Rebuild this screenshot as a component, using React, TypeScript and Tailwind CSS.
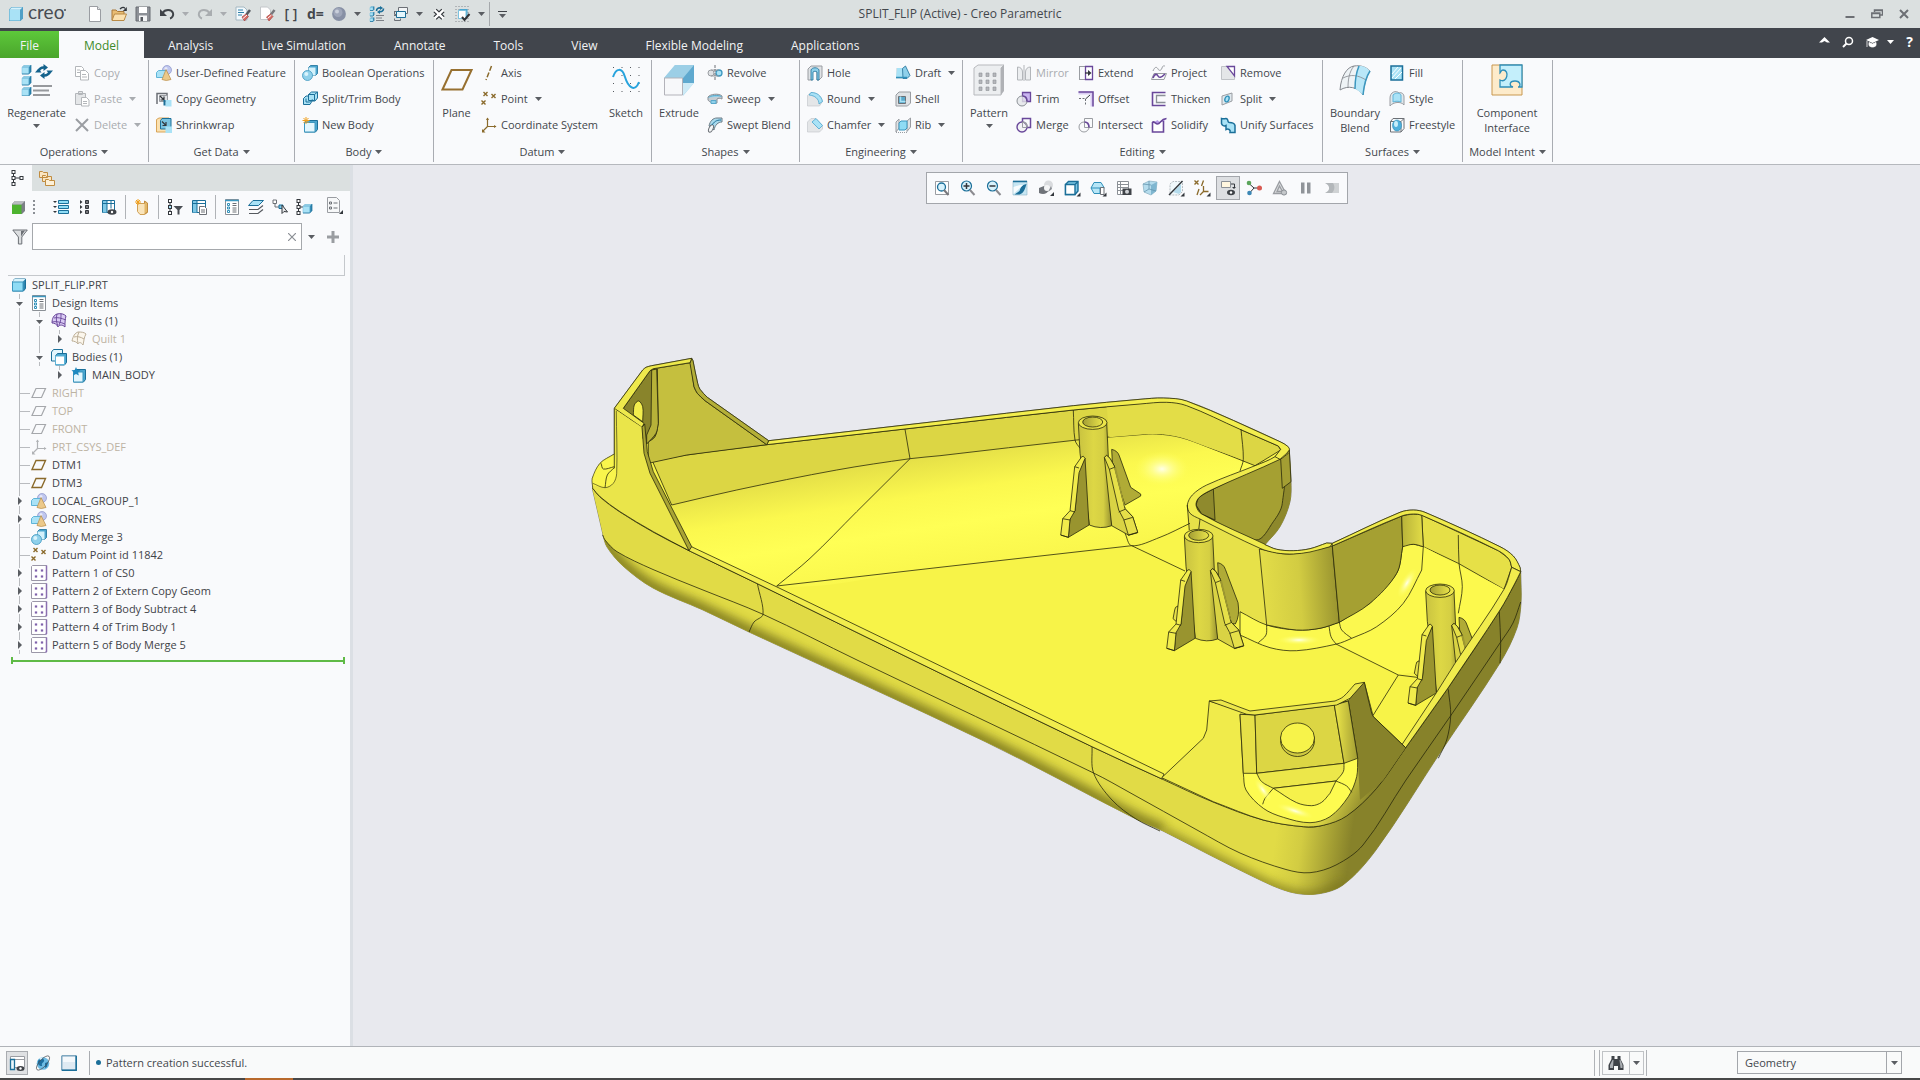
import React from 'react';
import type { ReactNode } from 'react';

/* ---------- small icons (16 x 16) ---------- */

const B = '#1b6f99';
const LB = '#a9e2f6';
const P = '#69479a';
const G = '#9a9da2';
const T = '#8a6a2b';

const cube = (x: number, y: number, s: number, f = LB) => {
  const d = s / 4;
  return (
    <g key={`${x}-${y}`}>
      <path d={`M${x} ${y + d}l${d} ${-d}h${s - d}v${s - d}l${-d} ${d}h${-(s - d)}z`} fill="#2f86b0" />
      <path d={`M${x} ${y + d}l${d} ${-d}h${s - d}l${-d} ${d}z`} fill="#8fcbe3" />
      <path d={`M${x} ${y + d}h${s - d}v${s - d}h${-(s - d)}z`} fill={f} stroke="#7cc3e0" strokeWidth=".6" />
      <path d={`M${x} ${y + s}h${s - d}l${d} ${-d}V${y}`} stroke={B} strokeWidth=".7" />
    </g>
  );
};

const node = (x: number, y: number, f = '#fff') => <rect x={x} y={y} width="3" height="3" fill={f} stroke="#33373c" />;
const cross = (x: number, y: number, c = T) => <path d={`M${x} ${y}l4 4m0-4l-4 4`} stroke={c} strokeWidth="1.4" />;

const page = (
  <>
    <path d="M2.5.5h8l3 3v12h-11z" fill="#fff" stroke={G} />
    <path d="M10.5.5v3h3" stroke={G} fill="#e4e6e8" />
  </>
);

const shapes = (
  <>
    <circle cx="11" cy="5" r="4.5" fill="#bfc6ee" stroke="#8a93c9" strokeWidth=".7" />
    <circle cx="10" cy="3.500" r="1.500" fill="#e6e9fa" />
    <path d="M.5 7.5l2-2h8v7h-10z" fill={LB} stroke="#5fb4d8" />
    <path d="M10 4.5l5 10q-5 2-9 0z" fill="#ecc98a" stroke="#b98d48" strokeWidth=".7" />
  </>
);

const merge = (
  <>
    <path d="M6.500 2.500l2-2h7v8l-2 2h-7z" fill="#4ba6cf" stroke={B} strokeWidth=".8" />
    <path d="M6.500 2.500h7v8h-7z" fill="#d3f1fb" />
    <circle cx="5.500" cy="10.500" r="5" fill="#8fd0ea" stroke="#3c97bf" strokeWidth=".8" />
    <circle cx="4.300" cy="9" r="2" fill="#d9f3fc" />
  </>
);

const regenSmall = (
  <>
    {cube(1, 0.5, 4)}
    {cube(1, 6, 4)}
    {cube(1, 11.5, 4)}
    <path d="M7 9.500h8M7 12h6M7 14.500h8" stroke="#7d8187" />
    <path d="M7.500 5c0-2.500 2-3.500 4-3M14.500 2.500c0 2.500-2 3.500-4 3" stroke={B} strokeWidth="1.600" />
    <path d="M11 0l3 2-3 2zM11 4l-3 2 3 2z" fill={B} />
  </>
);

const icons: Record<string, ReactNode> = {
  logo: (
    <>
      <path d="M1 3.500L3.500 1H15v11.500L12.500 15H1z" fill="#4f9fc6" />
      <path d="M1.500 4h10.500v10.500H1.500z" fill={LB} />
      <path d="M1.500 3.700L3.700 1.500h10.800L12 3.700z" fill="#d5f2fc" />
    </>
  ),
  page,
  open: (
    <>
      <path d="M1 4h4l1.500 1.500H13V14H1z" fill="#e9bd74" stroke="#a9793a" />
      <path d="M3.500 8h12L13 14.500H1z" fill="#fbe1b0" stroke="#b98a45" />
      <path d="M9 3c2-2 4-2 5-.5" stroke="#33373c" strokeWidth="1.300" />
      <path d="M15.800 1v4h-4z" fill="#33373c" />
    </>
  ),
  save: (
    <>
      <path d="M1 1h14v14H1z" fill="#8d9197" stroke="#686c72" />
      <path d="M4 1h8v6H4z" fill="#fff" />
      <path d="M4 9.500h8V15H4z" fill="#f4f5f6" />
      <path d="M5.500 11H8v4H5.500z" fill="#55595f" />
    </>
  ),
  undo: (
    <>
      <path d="M3.500 7c2.500-4 9-4 10.500 0 .8 2.500-1 5-3 5.500" stroke="#3f4348" strokeWidth="2" />
      <path d="M1 3v7h7z" fill="#3f4348" />
    </>
  ),
  redo: (
    <>
      <path d="M12.500 7c-2.500-4-9-4-10.500 0-.8 2.500 1 5 3 5.500" stroke="#a9adb0" strokeWidth="2" />
      <path d="M15 3v7H8z" fill="#a9adb0" />
    </>
  ),
  erase1: (
    <>
      <path d="M1 1h8l3 3v10H1z" fill="#f3fafd" stroke="#a5b8c3" />
      <path d="M3 4h5M3 6.500h6M3 9h4" stroke="#2d7fa8" />
      <path d="M15 4l-3.500 4.500" stroke="#55595f" strokeWidth="2.500" />
      <path d="M7 11l4-3 2.500 2.500-4 4.500z" fill="#d86a63" stroke="#9d3832" strokeWidth=".6" />
      <path d="M8 12.500l4-3.500" stroke="#fff" />
    </>
  ),
  erase2: (
    <>
      <path d="M1.500 1h7l3 3v9.500h-10z" fill="#fff" stroke="#c3c7ca" />
      <path d="M15.500 4l-3.500 4.500" stroke="#77777c" strokeWidth="2.500" />
      <path d="M7.500 11l4-3 2.500 2.500-4 4.500z" fill="#d86a63" stroke="#9d3832" strokeWidth=".6" />
      <path d="M8.500 12.500l4-3.500" stroke="#fff" />
    </>
  ),
  sphere: (
    <>
      <circle cx="8" cy="8" r="6.900" fill="#8790a5" />
      <circle cx="7" cy="6.500" r="4.500" fill="#9ea6b9" />
      <circle cx="6" cy="5.500" r="2" fill="#c9cfdb" />
    </>
  ),
  regenSmall,
  windows: (
    <>
      <path d="M5.500 1.500h9v6h-9zM1 5.500h4M1 9.500h4" fill="#f3f5f6" stroke="#6c7076" />
      <path d="M3.500 5.500h9v6h-9z" fill="#e5f7fd" stroke={B} />
      <path d="M1.500 12.500v2h6v-2" stroke="#6c7076" />
      <path d="M1.500 5.500v3h2" stroke="#6c7076" />
    </>
  ),
  xx: (
    <>
      <path d="M4 4.500l8 7.500m0-7.500l-8 7.500" stroke="#33373c" strokeWidth="4.600" />
      <path d="M3.600 4.100l8.800 8.300m0-8.300l-8.800 8.300" stroke="#fff" strokeWidth="2.400" />
    </>
  ),
  select: (
    <>
      <path d="M.5.5h15M.5 3.500h15M.5 6.500h15M.5 9.500h15M.5 12.500h15M.5 15.500h15" stroke="#85898e" strokeDasharray="1 2" />
      <path d="M3.500 4.500l1.500-1.500h7.500v8l-1.500 2h-7.500z" fill="#4ba6cf" />
      <path d="M3.500 4.500h7.500v8h-7.500z" fill="#fff" stroke="#7cc3e0" />
      <path d="M7 11l2.500 3 5-6" stroke="#33373c" strokeWidth="2" />
    </>
  ),
  copy: (
    <>
      <path d="M1.500 1.500h6l2 2v8h-8z" fill="#fff" stroke="#b3b6ba" />
      <path d="M6.500 5.500h5l3 3v6.500h-8z" fill="#fff" stroke="#b3b6ba" />
      <path d="M8 9.500h4M8 12h5M3 5h3M3 7.500h3" stroke="#b3b6ba" />
    </>
  ),
  paste: (
    <>
      <path d="M1.500 2.500h10v11h-10zM4.500.5h4v3h-4z" fill="#e4e6e8" stroke="#b3b6ba" />
      <path d="M7.500 6.500h5l2.500 2.500v6h-7.500z" fill="#fff" stroke="#b3b6ba" />
      <path d="M9 10.500h4M9 12.500h4" stroke="#b3b6ba" />
    </>
  ),
  del: <path d="M2 2l12 12M14 2L2 14" stroke="#9a9da2" strokeWidth="2" />,
  udf: shapes,
  copygeom: (
    <>
      <path d="M1 13V2.500h10V6" stroke="#6c7076" strokeWidth="1.500" />
      <path d="M3.500 4.500h8v6h-8z" fill="#dfe2e5" stroke="#9a9da2" />
      <path d="M4 5l4 4M8 5.500V9H4.500" stroke="#33373c" strokeWidth="1.200" />
      <path d="M9.500 9h6v6.500h-6z" fill={LB} />
      <path d="M7.500 9h2v5.500h-2z" fill={B} />
    </>
  ),
  shrink: (
    <>
      <path d="M.5 2.500L3 1h10v11l-2 3H.5z" fill="#fbe1b0" stroke="#d8a458" />
      <path d="M4.500 3.500l1.500-2h9v8l-2 2.500H4.500z" fill="#7ac3e0" stroke={B} />
      <path d="M6 4.500l4 4M10 5v3.500H6.500" stroke="#33373c" strokeWidth="1.200" />
      <path d="M9.500 9.500H16V16H9.500z" fill={LB} />
    </>
  ),
  boolean: merge,
  splittrim: (
    <>
      <path d="M6.500 3.500l3-2.500h6v6l-2.500 3h-3L8 13.500H1.500v-6L4 5h2.500z" fill={LB} stroke={B} />
      <path d="M6.500 3.500v6h6v-6h-6M4 7.500v3.500h3.500l3-2.500M12.500 3.500L15.500 1M1.500 7.500L4 5" stroke={B} />
    </>
  ),
  newbody: (
    <>
      <path d="M2.500 5.500l2-2h11v9l-2 2.500h-11z" fill="#4ba6cf" stroke={B} />
      <path d="M2.500 5.500h10.500V15H2.500z" fill="#e3f6fd" stroke="#3c97bf" />
      <path d="M4 0v7M.5 3.500h7M1.500 1l5 5m0-5l-5 5" stroke="#f0a01e" />
    </>
  ),
  axis: <path d="M10.500 1L5 15" stroke={T} strokeWidth="1.500" strokeDasharray="5 2" />,
  point: (
    <>
      {cross(2.5, 1)}
      {cross(10.5, 3)}
      {cross(0.5, 9.5)}
    </>
  ),
  csys: (
    <>
      <path d="M6.500 1v8.500H15M6.500 9.500l-5 5" stroke={T} strokeWidth="1.200" />
      <path d="M5 3l1.500-2.500L8 3zM13 8l2.500 1.500L13 11zM1 12v3.500h3.500z" fill={T} />
    </>
  ),
  csysDim: (
    <>
      <path d="M6.500 1v8.500H15M6.500 9.500l-5 5" stroke="#b0b2b5" strokeWidth="1.200" />
      <path d="M5 3l1.500-2.500L8 3zM13 8l2.500 1.500L13 11zM1 12v3.500h3.500z" fill="#b0b2b5" />
    </>
  ),
  revolve: (
    <>
      <ellipse cx="4" cy="8" rx="3" ry="3" fill="#dfe2e5" stroke={G} />
      <ellipse cx="12" cy="8" rx="3" ry="3" fill={LB} stroke="#3c97bf" strokeWidth="1.300" />
      <path d="M4 5h8M4 11h8" stroke={G} />
      <path d="M8 0v16" stroke="#6c7076" strokeDasharray="3 1" />
    </>
  ),
  sweep: (
    <>
      <path d="M1 6c2-3 11-4 14-1v3c-2-1-4-1-5 0v4c-3 1-8-1-9-3z" fill="#c5ccd2" stroke="#8b9096" />
      <path d="M1.500 6.500c2-2 9-3 13-1M4 9.500h5v3H4z" fill="#8fd0ea" stroke="#5aa9cb" />
    </>
  ),
  sweptblend: (
    <>
      <path d="M2 9c1-5 4-8 8-8h5v4c-4 0-7 3-8 8z" fill="#a8d9ec" stroke="#6c7b85" />
      <ellipse cx="4" cy="11.500" rx="2" ry="4" transform="rotate(25 4 11.500)" fill="#f3f5f6" stroke="#6c7076" />
      <path d="M5 8c2-3 4-5 9-5" stroke={B} />
    </>
  ),
  hole: (
    <>
      <path d="M1 4l3-3h11v11l-3 3h-2V6c-1-2-4-2-5 0v9H1z" fill="#dfe2e5" stroke={G} />
      <path d="M4 15V5c1-3 7-3 8 0v10h-2V7c-1-1-3-1-4 0v8z" fill="#8fd0ea" stroke={B} strokeWidth=".8" />
    </>
  ),
  round: (
    <>
      <path d="M.5 4.500L4 1.500c6 0 11 4 11.500 9l-3 4.500H.5z" fill="#e4e6e8" stroke="#c0c3c7" strokeWidth=".6" />
      <path d="M4 1.500c6 0 10 3 11.500 9L12 13C12 8 8 4.500 2 4z" fill={LB} stroke="#4ba6cf" strokeWidth=".8" />
    </>
  ),
  chamfer: (
    <>
      <path d="M.5 5L4 1.500h5l6.500 7V12l-3 3H.5z" fill="#e4e6e8" stroke="#c0c3c7" strokeWidth=".6" />
      <path d="M9 1.500l6.500 7L12 12 5 5z" fill={LB} stroke="#4ba6cf" strokeWidth=".8" />
    </>
  ),
  draft: (
    <>
      <path d="M1 3h6l3-2 5 10-3 3H1z" fill="#dfe2e5" />
      <path d="M2 3h5l1 9H1z" fill={LB} />
      <path d="M7.500 3.500L10.500 1l4.500 9.500-3 3H8z" fill="#8fd0ea" stroke={B} strokeWidth=".8" />
      <path d="M1 12.500h11" stroke="#2f8fb9" strokeWidth="1.500" />
    </>
  ),
  shell: (
    <>
      <path d="M1 4l3-3h11.500v11l-3 3H1z" fill="#dfe2e5" stroke={G} />
      <path d="M3.500 5.500h7v7h-7z" fill="#5aa9cb" stroke="#6c7076" />
      <path d="M5.500 5.500v5h5" stroke={LB} strokeWidth="1.500" />
    </>
  ),
  rib: (
    <>
      <path d="M1 5l3-3v9l-3 4zM12 4l3.500-3v9L12 14.500z" fill="#dfe2e5" stroke={G} />
      <path d="M4 6l2-2h6v7l-2 2H4z" fill="#8fdcf5" stroke="#3c97bf" />
      <path d="M1 15.500h11" stroke={G} strokeDasharray="1 1" />
    </>
  ),
  mirror: (
    <>
      <path d="M1.500 2v13h5V7c0-3-2-5-5-5zM14.500 2v13h-5V7c0-3 2-5 5-5z" fill="#eceef0" stroke="#b3b6ba" />
      <path d="M8 0v16" stroke="#b3b6ba" />
    </>
  ),
  trim: (
    <>
      <path d="M6.500 1.500h8v9h-8z" fill="#c9b5f0" stroke={P} strokeWidth="1.300" />
      <circle cx="6" cy="10" r="5" fill="#e4e6e8" fillOpacity=".8" stroke="#8b9096" />
      <path d="M6.500 5c3 0 4.500 2.500 4.500 5.500" stroke={P} strokeWidth="1.600" />
    </>
  ),
  merge2: (
    <>
      <path d="M6.500 5V1.500h8v9h-3.500" stroke={P} strokeWidth="1.500" />
      <circle cx="6" cy="10" r="5" fill="#f2f2f5" stroke={P} strokeWidth="1.400" />
      <path d="M6.500 5v5.500h4" stroke={G} />
      <path d="M6.500 5c3 0 4.500 2.500 4.500 5.500" stroke={G} strokeWidth="1.600" />
    </>
  ),
  extend: (
    <>
      <path d="M1.500 1v14M1 1.500h6M1 14.500h6" stroke={G} />
      <path d="M7.500 1.500h7v13h-7z" fill="#fff" stroke={P} strokeWidth="1.300" />
      <path d="M7 8h5" stroke="#33373c" strokeWidth="1.300" />
      <path d="M10 5l3.500 3-3.500 3z" fill="#33373c" />
    </>
  ),
  offset: (
    <>
      <path d="M.5.5h15v15h-3v-12H.5z" fill="#d9cdf2" />
      <path d="M.5 1h14.500v14.500" stroke={P} strokeWidth="1.500" />
      <path d="M1 7.500h6.500V15" stroke="#6c7076" strokeDasharray="2 1.500" />
      <path d="M7.500 8L12 4" stroke="#33373c" />
    </>
  ),
  intersect: (
    <>
      <path d="M6.500 1.500h8v9h-8z" stroke={G} />
      <circle cx="6" cy="10" r="5" stroke={G} />
      <path d="M6.500 5c3 0 4.500 2.500 4.500 5.500" stroke={P} strokeWidth="1.600" />
    </>
  ),
  project: (
    <>
      <path d="M2 6c2-5 4-4 5-2s3 2 4-1 2-2 3-2" stroke={G} />
      <path d="M3 8.500h12.500l-2.500 6H.5z" stroke={G} />
      <path d="M2 13c2-5 4-4 5-2s3 2 7-2" stroke={P} strokeWidth="1.600" />
    </>
  ),
  thicken: (
    <>
      <path d="M14.500 1.500h-13v13h13" stroke={P} strokeWidth="1.600" />
      <path d="M14.500 4.500h-9v7h9" stroke="#8b9096" strokeWidth="1.300" />
    </>
  ),
  solidify: (
    <>
      <path d="M2 5.500v9.500h10.500V4" fill="#fff" />
      <path d="M2 6c2-2 3 1 5 1 3 0 3-5 8.500-5.500l-3 3-4 .5-2-2L2 6z" fill="#b79be8" />
      <path d="M1.500 5c2-1 3 2 5 2 3 0 3-5 9-5.500M1.500 5v10h11V4" stroke={P} strokeWidth="1.600" />
    </>
  ),
  remove: (
    <>
      <path d="M1.500 1.500h13v13h-13z" fill="#e4e6e8" stroke="#c0c3c7" />
      <path d="M7 1.500h7.500V11z" fill="#fff" stroke={P} strokeWidth="1.300" />
    </>
  ),
  split: (
    <>
      <path d="M2 5l10-3v8L2 14z" fill="#dfe8ed" stroke={G} />
      <ellipse cx="7" cy="8" rx="2" ry="3" transform="rotate(20 7 8)" fill={LB} stroke="#2f8fb9" strokeWidth="1.300" />
    </>
  ),
  unify: <path d="M1.500 1.500c3 1 5-1 6 1s0 3 2 3 5 1 5.500 3v7h-5c1-3-2-4-4-3V8.500c-2 1-4 0-4.500-2z" fill={LB} stroke={B} strokeWidth="1.500" />,
  fill: (
    <>
      <path d="M2 1h11.500v14H2z" fill={LB} stroke={B} strokeWidth="1.500" />
      <path d="M3 9l6-7M3 13l9-10M6 14l7-7" stroke="#fff" />
    </>
  ),
  style: (
    <>
      <path d="M1 15V7c0-6 6-8 9-5 3-1 5 1 5 4v8c-3-4-11-3-14 1z" fill="#dfe8ed" stroke={G} />
      <path d="M4 11V4c3-3 7-2 8 0v7c-2-1-6-1-8 0z" fill={LB} stroke="#5fb4d8" />
    </>
  ),
  freestyle: (
    <>
      <path d="M1.500 4.500L4 1.500h11v10l-3 3.500H1.500zM1.500 4.500H12V15M12 4.500l3-3" stroke="#6c7076" />
      <ellipse cx="8" cy="8.500" rx="4.500" ry="5.500" fill="#4fb0dc" stroke="#2f8fb9" strokeWidth=".6" />
      <ellipse cx="7" cy="7" rx="2" ry="3" fill="#c7edfa" />
    </>
  ),
  zoomfit: (
    <>
      <path d="M1.500 1.500h13v13h-13z" fill="#fff" stroke={G} />
      <circle cx="7.500" cy="7" r="4" fill="#d8f2fc" stroke={B} strokeWidth="1.300" />
      <path d="M10 10l4.500 5" stroke="#77777c" strokeWidth="2" />
    </>
  ),
  zoomin: (
    <>
      <circle cx="6.500" cy="6" r="5" fill="#d8f2fc" stroke={B} strokeWidth="1.200" />
      <path d="M3.500 6h6M6.500 3v6" stroke="#33373c" strokeWidth="1.500" />
      <path d="M10 10l4.500 5" stroke="#8b8b90" strokeWidth="2" />
    </>
  ),
  zoomout: (
    <>
      <circle cx="6.500" cy="6" r="5" fill="#d8f2fc" stroke={B} strokeWidth="1.200" />
      <path d="M3.500 6h6" stroke="#33373c" strokeWidth="1.500" />
      <path d="M10 10l4.500 5" stroke="#8b8b90" strokeWidth="2" />
    </>
  ),
  repaint: (
    <>
      <path d="M1 1h14v14H1z" fill="#c6e6f3" stroke="#8fb5c6" strokeWidth=".6" />
      <path d="M14.500 4c-5 1-6 4-7 7l-5 3.500h5C12 13 13 9 14.500 4z" fill="#1c6f99" />
      <path d="M1.500 14L11 5c-4 0-7 1-9.500 2z" fill="#f7fcfe" />
      <path d="M1 1.500h14" stroke={B} strokeWidth="1.500" />
    </>
  ),
  render: (
    <>
      <circle cx="10.500" cy="5" r="4.500" fill="#d9dbde" />
      <path d="M1 8l5-2 4.500 4C9.500 14 5 15 1 13z" fill="#6f7379" />
      <circle cx="9" cy="8" r="3" fill="#f4f5f6" />
      <path d="M10 12l4-3-1-3z" fill="#8b8f95" />
      <path d="M16 12v4h-4z" fill="#33373c" />
    </>
  ),
  display: (
    <>
      <path d="M1.500 4.500l3-3h9.500v9.500l-3 3.500H1.500z" fill="#7fc8e6" stroke={B} strokeWidth="1.400" />
      <path d="M1.500 4.500H11v10H1.500zM11 4.500l3-3" fill="#fff" stroke={B} strokeWidth="1.400" />
      <path d="M16.500 12.500v4h-4z" fill="#33373c" />
    </>
  ),
  saved: (
    <>
      <path d="M4 2.500h7l3 5-2 6H4L1 8z" fill="#b7e6f7" stroke="#2f8fb9" />
      <path d="M1 8h9l4-.5M10 8v6" stroke="#2f8fb9" />
      <path d="M10.500 7.500h3.500v7h-3.500z" fill="#fff" stroke="#6c7076" />
      <path d="M16.500 12.500v4h-4z" fill="#33373c" />
    </>
  ),
  viewmgr: (
    <>
      <path d="M1.500 1.500h11v13h-11zM1.500 4.500h11M1.500 7.500h11M1.500 10.500h11M4.500 1.500v13" fill="#fff" stroke="#8b9096" />
      <path d="M6.500 8.500h9v6.500h-9z" fill="#3f4348" />
      <circle cx="11" cy="11.800" r="2" fill="#cfd2d6" />
    </>
  ),
  persp: (
    <>
      <path d="M1 4l6-3 8 1-1 9-5 4-7-3z" fill="#b5dced" stroke="#8fb5c6" strokeWidth=".8" />
      <path d="M9 5l6-3-1 9-5 4z" fill="#7fb6d0" />
      <path d="M7 1v8l-5 3M7 9l7 2M1 4l8 1" stroke="#5c8ea8" strokeWidth=".7" />
    </>
  ),
  section: (
    <>
      <path d="M2 4l3-2.500h9.500v10L11 15H2z" fill="#f0f8fb" stroke="#b5bdc2" strokeDasharray="2 1" />
      <path d="M5 12L13 4v8l-2 2z" fill="#b5dced" />
      <path d="M1 15L14.500 1" stroke="#33373c" strokeWidth="1.400" />
      <path d="M16.500 12.500v4h-4z" fill="#33373c" />
    </>
  ),
  datums: (
    <>
      {cross(0.5, 0.5)}
      <path d="M9.500.5L7.500 6M5 9l-2 6M9.500 6v5.500h5M9.500 11.500L6 15" stroke={T} strokeWidth="1.300" />
      <path d="M16.500 12.500v4h-4z" fill="#33373c" />
    </>
  ),
  annot: (
    <>
      <path d="M1.500 1.500h9v6h-9z" fill="#fff6df" stroke="#8b9096" />
      <path d="M11 4h3.500v4" stroke="#33373c" />
      <path d="M12 7l2 2 2-2z" fill="#33373c" />
      <ellipse cx="11" cy="12.500" rx="4" ry="2.800" fill="#3f4348" />
      <circle cx="11" cy="12.500" r="1.200" fill="#fff" />
    </>
  ),
  spin: (
    <>
      <path d="M3 3.500l5 4.500-4 4.500M8 8h5" stroke="#33373c" />
      <circle cx="3" cy="3" r="2.300" fill="#5aa45a" />
      <circle cx="13.500" cy="8" r="2.500" fill="#d85a52" />
      <circle cx="3.500" cy="13" r="2.300" fill="#3c87b5" />
    </>
  ),
  sim: (
    <>
      <path d="M7.500 1.500L14 13.500H1.500zM7.500 6l3 5.500H5z" fill="#dcdee0" stroke="#9a9da2" strokeWidth="1.300" />
      <circle cx="12" cy="12.500" r="2.600" fill="#c5c8cb" stroke="#8b9096" />
    </>
  ),
  pause: <path d="M3 2.500h3.500v11H3zM9 2.500h3.500v11H9z" fill="#909499" />,
  results: (
    <>
      <path d="M1 3h14v10H1c5-2 6-7 0-10z" fill="#b3b7ba" />
      <path d="M9 3h6v10H8c3-3 3-7 1-10z" fill="#cfd2d4" />
    </>
  ),
  treetab: (
    <>
      {node(2, 0.5)}
      {node(2, 6.500)}
      {node(2, 12.5)}
      {node(10, 6.5)}
      <path d="M3.500 3.500v3M3.500 9.500v3M5 8h5" stroke="#33373c" />
    </>
  ),
  folders: (
    <>
      <path d="M.5 1.500h3l1 1h4v5h-8zM3.500 5.500h3l1 1h5v5h-9z" fill="#fbe6c2" stroke="#c08c40" />
      <path d="M6.500 9.500h3l1 1h5v5h-9z" fill="#fdf0d8" stroke="#c08c40" />
    </>
  ),
  greencube: (
    <>
      <path d="M2 5l3-3h10v10l-3 3H2z" fill="#7b7f85" />
      <path d="M2 5.500h9.500v9.500H2z" fill="#4db32f" />
      <path d="M2 5.500l3-3.500h10l-3.500 3.500z" fill="#b9bcc0" />
    </>
  ),
  expand: (
    <>
      <path d="M5.500 1.500h10v3h-10zM5.500 6.500h10v3h-10zM5.500 11.500h10v3h-10z" fill="#8fdcf5" stroke={B} />
      <path d="M0 2h4L2 4zM0 7h4L2 9zM0 12h4l-2 2z" fill="#33373c" />
    </>
  ),
  collapse: (
    <>
      <path d="M8.500 1.500h3v3h-3zM8.500 6.500h3v3h-3zM8.500 11.500h3v3h-3z" fill="#77777c" stroke="#33373c" />
      <path d="M3 1l2.500 2L3 5zM3 6l2.500 2L3 10zM3 11l2.500 2L3 15z" fill="#33373c" />
    </>
  ),
  columns: (
    <>
      <path d="M1.500 1.500h12v12h-12z" fill="#fff" stroke={B} />
      <path d="M2 2h4v11.500H2z" fill="#7fc8e6" />
      <path d="M1.500 4.500h12M6 1.500v12M10 1.500v8" stroke={B} />
      <ellipse cx="11" cy="13" rx="4.500" ry="2.700" fill="#3f4348" />
      <circle cx="11" cy="13" r="1.200" fill="#fff" />
    </>
  ),
  newpart: (
    <>
      <path d="M3.500 4.500h7l3 2v7l-3 2H6l-2.500-3z" fill="#f9e4bb" stroke="#d0a055" />
      <path d="M10.500 4.500V2l3 2v9l-3 2" fill="#e3b869" stroke="#c08c40" />
      <path d="M4 0v6M1 3h6M2 1l4 4m0-4L2 5" stroke="#f0a01e" />
    </>
  ),
  treefilter: (
    <>
      {node(1.5, 0.5)}
      {node(1.5, 6.5, LB)}
      {node(1.5, 12.5)}
      <path d="M3 3.500v3M3 9.500v3" stroke="#33373c" />
      <path d="M6.500 7H16l-3.500 4v4.500h-2V11z" fill="#4a4e54" />
    </>
  ),
  treecols: (
    <>
      <path d="M1.500 1.500h13v12h-13z" fill="#fff" stroke={B} />
      <path d="M2 2h4v11.500H2z" fill="#7fc8e6" />
      <path d="M1.500 4.500h13M6 1.500v12" stroke={B} />
      <path d="M8.500 7.500h5l2 2v6h-7z" fill="#fff" stroke="#6c7076" />
      <path d="M10 11h4M10 13h4" stroke="#6c7076" />
    </>
  ),
  design: (
    <>
      <path d="M1.500.5h13v15h-13z" fill="#fff" stroke="#8b9096" />
      <path d="M1 1.500h14" stroke="#3c97bf" strokeWidth="1.500" />
      <path d="M3.500 4.500h2v2h-2zM3.500 8h2v2h-2zM3.500 11.500h2v2h-2z" stroke="#2f8fb9" />
      <path d="M8.500 4.500h4M8.500 6.500h4M8.500 9h4M8.500 11h4M8.500 13h4" stroke="#6c7076" />
    </>
  ),
  layers: (
    <>
      <path d="M1 14.500h9l5-4M1 10.500h9l5-4" stroke="#55595f" strokeWidth="1.200" />
      <path d="M5 1.500h10.500l-5 5H.5z" fill={LB} stroke={B} />
    </>
  ),
  treesel: (
    <>
      <path d="M1 1h3.500v3.500H1z" fill="#fff" stroke="#6c7076" />
      <path d="M3 4.500V8h4" stroke="#6c7076" />
      <path d="M7 6h4v3.500H7z" fill="#7fc8e6" stroke={B} />
      <path d="M10 6v8.500l2-2 3.500.5z" fill="#e4e6e8" stroke="#33373c" />
    </>
  ),
  treebody: (
    <>
      {node(1, 0.5)}
      {node(1, 6.5)}
      {node(1, 12.5)}
      <path d="M2.500 3.500v3M2.500 9.500v3M4 8h3" stroke="#33373c" />
      {cube(7, 5, 9)}
    </>
  ),
  treeset: (
    <>
      <path d="M1.500.5h9l3 3v12h-12z" fill="#f7f8f9" stroke={G} />
      <path d="M3.500 5h2v2h-2zM3.500 10h2v2h-2z" stroke="#6c7076" />
      <path d="M7.500 6h4M7.500 11h4" stroke="#6c7076" />
      <path d="M17 13v4h-4z" fill="#33373c" />
    </>
  ),
  funnel: (
    <>
      <path d="M.8 1h14.500L9.800 8v7H6.400V8z" fill="#dcdee0" stroke="#6c7076" />
      <path d="M9 2l4-.5-4 6z" fill="#6c7076" />
    </>
  ),
  quilts: (
    <>
      <path d="M1 10c0-5 2-8 5-9 4-1 7 0 9 2-1 3-1 6-1 11-3-3-6-2-7 0-1-3-4-4-6-4z" fill="#d9caf3" stroke={P} />
      <path d="M3 5c3-1 7 0 12 2M6 1c-1 4-1 8 1 12M10 1c0 4 0 7-2 11M1 9c4-1 8 0 13 2" stroke={P} strokeWidth=".9" />
    </>
  ),
  quilt: (
    <>
      <path d="M1 10c1-5 3-8 6-9 3 0 6 0 8 2-2 3-2 7-3 11-2-3-4-3-5-1-1-2-4-3-6-3z" fill="#fbf6ec" stroke="#bcae97" />
      <path d="M3 6c3-1 7 0 10 2M8 1c-2 4-2 8-1 11" stroke="#bcae97" />
    </>
  ),
  bodies: (
    <>
      <path d="M.5 3l2-2.500h9v9l-2 2.500h-9z" fill="#e3f6fd" stroke={B} />
      <path d="M4.500 7l2-2.500h9v9l-2 2.500h-9z" fill="#4ba6cf" stroke={B} />
      <path d="M4.500 7h9v8.500h-9z" fill="#fff" stroke="#5fb4d8" />
    </>
  ),
  mainbody: (
    <>
      <path d="M2.500 4.500l2-2h10v10l-2 2.500h-10z" fill="#4ba6cf" stroke={B} />
      <path d="M2.500 5h9.500v10H2.500z" fill="#e3f6fd" stroke="#3c97bf" />
      <path d="M5 0l1.300 3 3.200.3-2.400 2.100.8 3.200L5 6.900 2.100 8.600l.8-3.200L.5 3.300 3.700 3z" fill="#1f8ac0" />
    </>
  ),
  planeDim: <path d="M5 3.500h9.500l-4 9H1z" stroke="#a5a7ab" strokeWidth="1.200" />,
  plane: <path d="M5 3.500h9.500l-4 9H1z" stroke={T} strokeWidth="1.400" />,
  pattern: (
    <>
      <path d="M.5 1.500l1-1h14v14l-1 1H.5z" fill="#fff" stroke="#9b97a8" />
      <path d="M15.500.5v14l-1 1" stroke="#8b6fb0" strokeWidth="1.500" />
      <path d="M4 4.500h2v2h-2zM10 4.500h2v2h-2zM4 10.500h2v2h-2zM10 10.500h2v2h-2z" fill={P} stroke="#b5a5d0" strokeWidth=".6" />
    </>
  ),
  group: shapes,
  bodymerge: merge,
  part: (
    <>
      <path d="M1.500 5l2-3h11v9.500l-2 2.500h-11z" fill="#2f86b0" stroke={B} />
      <path d="M1.500 5h10.500v9H1.500z" fill="#8fdcf5" stroke="#3c97bf" />
      <path d="M1.500 4.500l2-2.500h11L12 4.500z" fill="#d8f4fd" />
    </>
  ),
  navpanel: (
    <>
      <path d="M1.500 1.500h14v11h-14z" fill="#fff" stroke={G} />
      <path d="M1.500 4.500h14" stroke={G} />
      <path d="M1.500 4.500h4v10h-4z" fill="#eaf6fb" stroke={B} strokeWidth="1.300" />
      <ellipse cx="11.500" cy="13.500" rx="4" ry="2.500" fill="#3f4348" />
      <circle cx="11.500" cy="13.500" r="1.200" fill="#fff" />
    </>
  ),
  globe: (
    <>
      <circle cx="8" cy="8.500" r="6.300" fill="#6cbbe3" />
      <path d="M3 6c2-3 5-3 6-1s-3 3-2 5-3 1-4-1zM10 8l3-1-1 5-2 1z" fill="#1c6fa0" />
      <path d="M4 4c1-1 3-1.500 4-1L6 5z" fill="#d8f2fc" />
      <ellipse cx="8" cy="8" rx="9" ry="3.600" transform="rotate(-48 8 8)" stroke="#4a5056" strokeWidth=".7" />
    </>
  ),
  windowicon: (
    <>
      <path d="M.8.800h14.400v14.400H.800z" fill="#dfeaf2" stroke="#4f87a8" />
      <path d="M15.200.8v14.400H.8" stroke={B} strokeWidth="1.500" />
      <path d="M2 2h12v5H2z" fill="#f4f8fb" />
    </>
  ),
  binoculars: (
    <>
      <path d="M3.500 1h3v3h3V1h3v3l3 6v5h-5.500v-4h-4v4H.5v-5l3-6z" fill="#3f4348" />
      <path d="M2 10l2.500-5h1L5 13H2zM11.500 5h1l2 5v3h-2z" fill="#a9adb1" />
    </>
  ),
};

function Icon({ name }: { name: string }) {
  return (
    <svg viewBox="0 0 16 16" className="h-4 w-4 shrink-0 overflow-visible" fill="none" aria-hidden="true">
      {icons[name]}
    </svg>
  );
}

function Caret({ light, dim }: { light?: boolean; dim?: boolean }) {
  return (
    <svg viewBox="0 0 7 4" className="h-1 w-[7px] shrink-0" aria-hidden="true">
      <path d="M0 0h7L3.500 4z" fill={light ? '#ffffff' : dim ? '#a9acb0' : '#5a5d62'} />
    </svg>
  );
}

/* ---------- large icons (32 x 32) ---------- */

const bigIcons: Record<string, ReactNode> = {
  regenerate: (
    <>
      {cube(1, 1, 9)}
      {cube(1, 12, 9)}
      {cube(1, 23, 9)}
      <path d="M12 22h19M12 26.500h16M12 31h17" stroke="#97999d" strokeWidth="2" />
      <path d="M17.500 8c0-3 3-5 6-4.500M28.500 7c0 3-3 5-6 4.500" stroke="#14628c" strokeWidth="2.500" />
      <path d="M22.500 0l4.500 3.500-4.500 3.500zM23.500 8l-4.500 3.500 4.500 3.500z" fill="#14628c" />
      <path d="M14 8.500h6.500l-3-4zM25.500 6.500H32l-3.500 4z" fill="#14628c" />
    </>
  ),
  plane: <path d="M10.500 6h20l-9 19.500h-20z" stroke="#977030" strokeWidth="2" />,
  sketch: (
    <>
      {[3, 11, 19, 27].map((y) => (
        <path key={y} d={`M3 ${y + 0.500}h27`} stroke="#55595f" strokeDasharray="1 7.500" />
      ))}
      <path d="M3 13C6 4 12 3 15 13s10 16 14 5" stroke="#27a3dd" strokeWidth="2" />
    </>
  ),
  extrude: (
    <>
      <path d="M1 14L12 1h19v18L20 32V14z" fill="#b5def0" />
      <path d="M12 1h19L20 14H1z" fill="#9ccfe6" />
      <path d="M31 1v18H20v-5z" fill="#5fa9cf" />
      <path d="M31 19L20 31V19z" fill="#cdeaf6" />
      <path d="M1.500 14h18v17h-18z" fill="#f7f8fa" stroke="#b3b3ba" />
    </>
  ),
  pattern: (
    <>
      <path d="M1 4l4-3h26l-3 3v27H1z" fill="#eceef0" stroke="#b7b9bd" />
      <path d="M28 4l3-3v26l-3 4z" fill="#b0b2b6" />
      {[9, 16, 23].map((y) => (
        <path key={y} d={`M6 ${y}h3v3.500H6zM13 ${y}h3v3.500h-3zM20 ${y}h3v3.500h-3z`} fill="#b5b7bb" stroke="#8f9297" strokeWidth=".6" />
      ))}
    </>
  ),
  boundary: (
    <>
      <path d="M1 26C2 12 8 3 15 2c7-1 12 1 16 5-4 6-6 14-7 24-5-8-15-10-23-5z" fill="#eef3f6" stroke="#85898f" />
      <path d="M20 2c6 0 8 2 11 5-4 6-6 14-7 24-3-3-5-5-8-6 0-9 1-17 4-23z" fill="#b9e7f8" />
      <path d="M15 2C10 8 9 16 9 24M4 14c8-4 15-3 23 2" stroke="#85898f" strokeWidth=".8" />
      <path d="M20 2c-3 7-4 14-4 23M31 7c-4 6-6 14-7 24" stroke="#3c97bf" strokeWidth="1.500" />
    </>
  ),
  component: (
    <>
      <path d="M1 1h30v30H1z" fill="#fdebcb" stroke="#c8974f" />
      <path d="M9 1h22v22h-4c3 0 3-6-3-6s-6 5-2 6H9v-7c7 4 10-10 3-10-2 0-2 2-3 3z" fill="#c4effb" stroke="#2f8fb9" strokeWidth="1.300" />
    </>
  ),
};

/* ---------- ribbon ---------- */

type Item = { i: string; t: string; caret?: boolean; dim?: boolean };

function Small({ i, t, caret, dim }: Item) {
  return (
    <button type="button" disabled={dim} className={`flex h-[26px] items-center gap-1 whitespace-nowrap ${dim ? 'text-[#a9acb0]' : ''}`}>
      <Icon name={i} />
      <span>{t}</span>
      {caret && (
        <span className="ml-[3px] flex">
          <Caret dim={dim} />
        </span>
      )}
    </button>
  );
}

function Col({ items, className = '' }: { items: Item[]; className?: string }) {
  return (
    <div className={`flex shrink-0 flex-col items-start ${className}`}>
      {items.map((it) => (
        <Small key={it.t} {...it} />
      ))}
    </div>
  );
}

function Big({ i, lines, caret, className }: { i: string; lines: string[]; caret?: boolean; className: string }) {
  return (
    <button type="button" className={`flex shrink-0 flex-col items-center pt-1 leading-[15px] whitespace-nowrap ${className}`}>
      <svg viewBox="0 0 32 32" className="mb-[9px] h-8 w-8 shrink-0" fill="none" aria-hidden="true">
        {bigIcons[i]}
      </svg>
      {lines.map((l) => (
        <span key={l}>{l}</span>
      ))}
      {caret && (
        <span className="mt-1 flex">
          <Caret />
        </span>
      )}
    </button>
  );
}

function Group({ label, className, children }: { label: string; className: string; children: ReactNode }) {
  return (
    <section aria-label={label} className={`my-0.5 flex h-[102px] shrink-0 flex-col border-r border-[#a9acb2] ${className}`}>
      <div className="flex h-[82px] items-start">{children}</div>
      <button type="button" className="flex h-5 items-center justify-center gap-1 whitespace-nowrap">
        {label}
        <Caret />
      </button>
    </section>
  );
}

function Ribbon() {
  return (
    <div className="flex h-[107px] shrink-0 overflow-hidden border-b border-[#b5b8bd] bg-[#f9fafc]">
      <Group label="Operations" className="w-[149px]">
        <Big i="regenerate" lines={['Regenerate']} caret className="w-[73px]" />
        <Col
          className="ml-px"
          items={[
            { i: 'copy', t: 'Copy', dim: true },
            { i: 'paste', t: 'Paste', caret: true, dim: true },
            { i: 'del', t: 'Delete', caret: true, dim: true },
          ]}
        />
      </Group>
      <Group label="Get Data" className="w-[146px]">
        <Col
          className="ml-[7px]"
          items={[
            { i: 'udf', t: 'User-Defined Feature' },
            { i: 'copygeom', t: 'Copy Geometry' },
            { i: 'shrink', t: 'Shrinkwrap' },
          ]}
        />
      </Group>
      <Group label="Body" className="w-[139px]">
        <Col
          className="ml-[7px]"
          items={[
            { i: 'boolean', t: 'Boolean Operations' },
            { i: 'splittrim', t: 'Split/Trim Body' },
            { i: 'newbody', t: 'New Body' },
          ]}
        />
      </Group>
      <Group label="Datum" className="w-[218px]">
        <Big i="plane" lines={['Plane']} className="w-[45px]" />
        <Col
          className="ml-0.5 w-[123px]"
          items={[
            { i: 'axis', t: 'Axis' },
            { i: 'point', t: 'Point', caret: true },
            { i: 'csys', t: 'Coordinate System' },
          ]}
        />
        <Big i="sketch" lines={['Sketch']} className="w-[44px]" />
      </Group>
      <Group label="Shapes" className="w-[148px]">
        <Big i="extrude" lines={['Extrude']} className="w-[54px]" />
        <Col
          className="ml-px"
          items={[
            { i: 'revolve', t: 'Revolve' },
            { i: 'sweep', t: 'Sweep', caret: true },
            { i: 'sweptblend', t: 'Swept Blend' },
          ]}
        />
      </Group>
      <Group label="Engineering" className="w-[163px]">
        <Col
          className="ml-[7px] w-[88px]"
          items={[
            { i: 'hole', t: 'Hole' },
            { i: 'round', t: 'Round', caret: true },
            { i: 'chamfer', t: 'Chamfer', caret: true },
          ]}
        />
        <Col
          items={[
            { i: 'draft', t: 'Draft', caret: true },
            { i: 'shell', t: 'Shell' },
            { i: 'rib', t: 'Rib', caret: true },
          ]}
        />
      </Group>
      <Group label="Editing" className="w-[360px]">
        <Big i="pattern" lines={['Pattern']} caret className="w-[52px]" />
        <Col
          className="ml-px w-[62px]"
          items={[
            { i: 'mirror', t: 'Mirror', dim: true },
            { i: 'trim', t: 'Trim' },
            { i: 'merge2', t: 'Merge' },
          ]}
        />
        <Col
          className="w-[73px]"
          items={[
            { i: 'extend', t: 'Extend' },
            { i: 'offset', t: 'Offset' },
            { i: 'intersect', t: 'Intersect' },
          ]}
        />
        <Col
          className="w-[69px]"
          items={[
            { i: 'project', t: 'Project' },
            { i: 'thicken', t: 'Thicken' },
            { i: 'solidify', t: 'Solidify' },
          ]}
        />
        <Col
          items={[
            { i: 'remove', t: 'Remove' },
            { i: 'split', t: 'Split', caret: true },
            { i: 'unify', t: 'Unify Surfaces' },
          ]}
        />
      </Group>
      <Group label="Surfaces" className="w-[140px]">
        <Big i="boundary" lines={['Boundary', 'Blend']} className="w-16" />
        <Col
          className="ml-0.5"
          items={[
            { i: 'fill', t: 'Fill' },
            { i: 'style', t: 'Style' },
            { i: 'freestyle', t: 'Freestyle' },
          ]}
        />
      </Group>
      <Group label="Model Intent" className="w-[90px]">
        <Big i="component" lines={['Component', 'Interface']} className="w-[88px]" />
      </Group>
    </div>
  );
}

/* ---------- title bar and tabs ---------- */

function Tool({ name, label, caret, dim }: { name: string; label: string; caret?: boolean; dim?: boolean }) {
  return (
    <button type="button" aria-label={label} className="flex items-center gap-[7px]">
      <Icon name={name} />
      {caret && <Caret dim={dim} />}
    </button>
  );
}

function TitleBar() {
  return (
    <header className="grid h-7 shrink-0 grid-cols-[1fr_auto_1fr] items-center bg-[#dbe0e0] text-xs">
      <div className="flex items-center gap-2 pl-2">
        <div className="flex w-[71px] items-center gap-1">
          <Icon name="logo" />
          <span className="pb-1 font-['Lato',sans-serif] text-[19px] leading-6 text-[#484c52]">creo</span>
          <span className="-ml-1 mb-2 h-0.5 w-0.5 rounded-full bg-[#484c52]" />
        </div>
        <Tool name="page" label="New" />
        <Tool name="open" label="Open" />
        <Tool name="save" label="Save" />
        <Tool name="undo" label="Undo" caret dim />
        <Tool name="redo" label="Redo" caret dim />
        <Tool name="erase1" label="Erase current" />
        <Tool name="erase2" label="Erase not displayed" />
        <button type="button" className="w-4 text-center text-sm leading-4 font-semibold">[ ]</button>
        <button type="button" className="w-4 text-sm leading-4 font-bold">d=</button>
        <Tool name="sphere" label="Appearances" caret />
        <Tool name="regenSmall" label="Regenerate" />
        <Tool name="windows" label="Windows" caret />
        <Tool name="xx" label="Close" />
        <Tool name="select" label="Selection" caret />
        <span className="-ml-1 h-6 w-px bg-[#a5a9ac]" />
        <button type="button" aria-label="Customize toolbar" className="flex flex-col items-center gap-0.5">
          <span className="h-px w-[9px] bg-[#3f4348]" />
          <Caret />
        </button>
      </div>
      <h1 className="whitespace-nowrap">SPLIT_FLIP (Active) - Creo Parametric</h1>
      <div className="flex items-center justify-end gap-[15px] pr-2.5">
        <button type="button" aria-label="Minimize">
          <svg viewBox="0 0 12 12" className="h-3 w-3" aria-hidden="true">
            <path d="M1.500 8h9v2h-9z" fill="#6c6f74" />
          </svg>
        </button>
        <button type="button" aria-label="Restore">
          <svg viewBox="0 0 12 12" className="h-3 w-3" fill="none" aria-hidden="true">
            <path d="M3.500 4V2h8v5H9M3.500 2.500h8" stroke="#6c6f74" strokeWidth="1.500" />
            <path d="M.8 5h8v4.500h-8zM.8 5.500h8" stroke="#6c6f74" strokeWidth="1.500" />
          </svg>
        </button>
        <button type="button" aria-label="Close window">
          <svg viewBox="0 0 12 12" className="h-3 w-3" fill="none" aria-hidden="true">
            <path d="M2 2l8 8M10 2l-8 8" stroke="#6c6f74" strokeWidth="2" />
          </svg>
        </button>
      </div>
    </header>
  );
}

const tabs = ['Analysis', 'Live Simulation', 'Annotate', 'Tools', 'View', 'Flexible Modeling', 'Applications'];

function TabBar() {
  return (
    <nav className="flex h-[30px] shrink-0 items-stretch bg-[#41454c] pt-[3px] text-xs text-[#f2f3f4]">
      <button type="button" className="w-[59px] bg-linear-to-b from-[#5dc83a] to-[#4aa52c] pt-0.5">File</button>
      <button type="button" className="w-[85px] bg-[#f9fafc] pt-0.5 text-[#3d8a2a]">Model</button>
      {tabs.map((t) => (
        <button key={t} type="button" className="px-6 pt-0.5 whitespace-nowrap">{t}</button>
      ))}
      <div className="mb-[5px] ml-auto flex items-center gap-3 pr-[7px]">
        <button type="button" aria-label="Collapse ribbon" className="pb-1">
          <svg viewBox="0 0 11 7" className="h-[7px] w-[11px]" aria-hidden="true">
            <path d="M5.500 0L11 5.500H8L5.500 4 3 5.500H0z" fill="#fff" />
          </svg>
        </button>
        <button type="button" aria-label="Search">
          <svg viewBox="0 0 12 12" className="h-3 w-3" fill="none" aria-hidden="true">
            <circle cx="7" cy="5" r="3.500" stroke="#fff" strokeWidth="1.500" />
            <path d="M4.500 7.500L1 11" stroke="#fff" strokeWidth="2" />
          </svg>
        </button>
        <button type="button" aria-label="Learning" className="flex items-center gap-2">
          <svg viewBox="0 0 13 12" className="h-3 w-[13px]" aria-hidden="true">
            <path d="M6.500 1l6.500 3-6.500 3L0 4z" fill="#fff" />
            <path d="M3 6.500l3.500 1.500L10 6.500V9.500c-2 2-5 2-7 0zM1 5v6" fill="#fff" stroke="#fff" strokeWidth=".8" />
          </svg>
          <Caret light />
        </button>
        <button type="button" className="text-sm leading-4 font-bold text-white">?</button>
      </div>
    </nav>
  );
}

/* ---------- model tree panel ---------- */

type Cell = 'line' | 'none' | 'leaf' | 'shut' | 'subshut' | 'subopen';
type Row = { t: string; i: string; c: Cell[]; dim?: boolean };

const rows: Row[] = [
  { t: 'SPLIT_FLIP.PRT', i: 'part', c: [] },
  { t: 'Design Items', i: 'design', c: ['subopen'] },
  { t: 'Quilts (1)', i: 'quilts', c: ['line', 'subopen'] },
  { t: 'Quilt 1', i: 'quilt', c: ['line', 'line', 'subshut'], dim: true },
  { t: 'Bodies (1)', i: 'bodies', c: ['line', 'subopen'] },
  { t: 'MAIN_BODY', i: 'mainbody', c: ['line', 'none', 'subshut'] },
  { t: 'RIGHT', i: 'planeDim', c: ['leaf'], dim: true },
  { t: 'TOP', i: 'planeDim', c: ['leaf'], dim: true },
  { t: 'FRONT', i: 'planeDim', c: ['leaf'], dim: true },
  { t: 'PRT_CSYS_DEF', i: 'csysDim', c: ['leaf'], dim: true },
  { t: 'DTM1', i: 'plane', c: ['leaf'] },
  { t: 'DTM3', i: 'plane', c: ['leaf'] },
  { t: 'LOCAL_GROUP_1', i: 'group', c: ['shut'] },
  { t: 'CORNERS', i: 'group', c: ['shut'] },
  { t: 'Body Merge 3', i: 'bodymerge', c: ['leaf'] },
  { t: 'Datum Point id 11842', i: 'point', c: ['leaf'] },
  { t: 'Pattern 1 of CS0', i: 'pattern', c: ['shut'] },
  { t: 'Pattern 2 of Extern Copy Geom', i: 'pattern', c: ['shut'] },
  { t: 'Pattern 3 of Body Subtract 4', i: 'pattern', c: ['shut'] },
  { t: 'Pattern 4 of Trim Body 1', i: 'pattern', c: ['shut'] },
  { t: 'Pattern 5 of Body Merge 5', i: 'pattern', c: ['shut'] },
];

const cellArt: Record<Cell, ReactNode> = {
  none: null,
  line: <path d="M8.500 0v18" stroke="#b9bbbf" />,
  leaf: <path d="M8.500 0v18M8.500 9.500h10.500" stroke="#b9bbbf" />,
  shut: (
    <>
      <path d="M8.500 0v4M8.500 14v4" stroke="#b9bbbf" />
      <path d="M7 5v8l4-4z" fill="#5a5d62" />
    </>
  ),
  subshut: (
    <>
      <path d="M8.500 0v4" stroke="#b9bbbf" />
      <path d="M7 5v8l4-4z" fill="#5a5d62" />
    </>
  ),
  subopen: (
    <>
      <path d="M8.500 0v5M8.500 14v4" stroke="#b9bbbf" />
      <path d="M5 8h7l-3.500 4z" fill="#5a5d62" />
    </>
  ),
};

function Sep() {
  return <span className="h-6 w-px bg-[#b0b3b7]" />;
}

function IconButton({ name, label }: { name: string; label: string }) {
  return (
    <button type="button" aria-label={label} className="shrink-0">
      <Icon name={name} />
    </button>
  );
}

function SidePanel() {
  return (
    <aside className="flex w-[353px] shrink-0 flex-col border-r-[3px] border-[#dbdfe4] bg-[#f9fafc]">
      <div className="flex h-[26px] bg-[#dbe0e0]">
        <button type="button" aria-label="Model tree" className="flex w-8 items-center bg-[#f9fafc] pl-2.5">
          <Icon name="treetab" />
        </button>
        <button type="button" aria-label="Folder browser" className="flex items-center pl-[7px]">
          <Icon name="folders" />
        </button>
      </div>
      <div className="flex h-8 items-center gap-2 pl-2.5">
        <div className="flex items-center gap-[7px]">
          <IconButton name="greencube" label="Part" />
          <svg viewBox="0 0 2 14" className="h-3.5 w-0.5" aria-hidden="true">
            <path d="M1 0v14" stroke="#8b8f95" strokeWidth="2" strokeDasharray="2 2" />
          </svg>
        </div>
        <div className="ml-2.5 flex items-center gap-2">
          <IconButton name="expand" label="Expand all" />
          <IconButton name="collapse" label="Collapse all" />
          <IconButton name="columns" label="Columns" />
          <Sep />
          <IconButton name="newpart" label="New" />
          <Sep />
          <IconButton name="treefilter" label="Tree filters" />
          <IconButton name="treecols" label="Tree columns" />
          <Sep />
          <IconButton name="design" label="Design items" />
          <IconButton name="layers" label="Layers" />
          <IconButton name="treesel" label="Select in tree" />
          <IconButton name="treebody" label="Bodies" />
        </div>
        <div className="ml-auto pr-2">
          <IconButton name="treeset" label="Tree settings" />
        </div>
      </div>
      <div className="flex h-[27px] items-center pl-3">
        <Icon name="funnel" />
        <div className="ml-1 flex h-full w-[270px] items-center border border-[#a5a8ac] bg-white pr-[5px]">
          <input aria-label="Filter tree" type="text" className="h-full min-w-0 flex-1 px-1 outline-none" />
          <button type="button" aria-label="Clear filter">
            <svg viewBox="0 0 8 8" className="h-2 w-2" fill="none" aria-hidden="true">
              <path d="M0 0l8 8M8 0L0 8" stroke="#8b8f95" strokeWidth="1.200" />
            </svg>
          </button>
        </div>
        <button type="button" aria-label="Filter options" className="ml-1.5">
          <Caret />
        </button>
        <button type="button" aria-label="Add filter" className="ml-3">
          <svg viewBox="0 0 12 12" className="h-3 w-3" aria-hidden="true">
            <path d="M4.500 0h3v4.500H12v3H7.500V12h-3V7.500H0v-3h4.500z" fill="#9a9da1" />
          </svg>
        </button>
      </div>
      <div className="mt-[5px] mr-[5px] ml-2 h-[21px] border-r border-b border-[#c5c8cc]" />
      <ul>
        {rows.map((r) => (
          <li key={r.t} className={`flex h-[18px] items-center pl-[11px] ${r.dim ? 'text-[#bdb3a3]' : 'text-[#3f4348]'}`}>
            {r.c.map((c, n) => (
              <svg key={n} viewBox="0 0 20 18" className="h-[18px] w-5 shrink-0" fill="none" aria-hidden="true">
                {cellArt[c]}
              </svg>
            ))}
            <Icon name={r.i} />
            <span className="ml-[5px] whitespace-nowrap">{r.t}</span>
          </li>
        ))}
      </ul>
      <div className="mt-[3px] mr-[5px] ml-[11px] flex h-[7px] items-center border-x-2 border-[#5fba46]">
        <span className="h-0.5 w-full bg-[#5fba46]" />
      </div>
    </aside>
  );
}

/* ---------- CAD model ---------- */

type Pt = [number, number];
const at = (ox: number, oy: number) => (s: string): Pt[] =>
  s.split(' ').map((p) => {
    const [x, y] = p.split(',').map(Number);
    return [ox + x / 3, oy + y / 3];
  });
const A = at(570, 340);
const M = at(940, 370);
const R = at(1130, 480);
const W = (s: string): Pt[] => s.split(' ').map((p) => p.split(',').map(Number) as Pt);

/* Catmull-Rom spline through each segment; segments join with straight lines. */
function trace(...segs: Pt[][]) {
  let d = '';
  for (const q of segs) {
    d += `${d ? 'L' : 'M'}${q[0][0].toFixed(1)} ${q[0][1].toFixed(1)}`;
    for (let i = 0; i < q.length - 1; i++) {
      const p0 = q[i - 1] ?? q[i];
      const p1 = q[i];
      const p2 = q[i + 1];
      const p3 = q[i + 2] ?? p2;
      const len = Math.hypot(p2[0] - p1[0], p2[1] - p1[1]);
      const ta = len / (len + Math.hypot(p1[0] - p0[0], p1[1] - p0[1]) || 1);
      const tb = len / (len + Math.hypot(p3[0] - p2[0], p3[1] - p2[1]) || 1);
      const c1 = [p1[0] + ((p2[0] - p0[0]) * ta) / 3, p1[1] + ((p2[1] - p0[1]) * ta) / 3];
      const c2 = [p2[0] - ((p3[0] - p1[0]) * tb) / 3, p2[1] - ((p3[1] - p1[1]) * tb) / 3];
      d += `C${c1[0].toFixed(1)} ${c1[1].toFixed(1)} ${c2[0].toFixed(1)} ${c2[1].toFixed(1)} ${p2[0].toFixed(1)} ${p2[1].toFixed(1)}`;
    }
  }
  return d;
}
const area = (...s: Pt[][]) => `${trace(...s)}Z`;
const rev = (s: Pt[]) => [...s].reverse();

const bottomRight = W('1520.7,571.7 1521,603 1517,628 1500,663 1440,753 1376,850 1343,885 1317,894 1290,892 1256,878 1163,831');
const bottomFront = W('1163,831 1132,817 986,742 749,632 703,610 653,588 623,566 607,547 602.7,534');
const lobe = M('1048,240 1053,330 1050,395 1020,470 975,524');
const notch = M('975,524 1010,538 1060,542 1110,536 1160,519');
const silhouette = area(
  A('133,342'), A('133,205'), A('218,90 228,82 245,77'), A('365,55'), A('369,62 383,130 390,148 412,172'), A('596,302'),
  M('0,153 400,107 600,88 670,84 740,93 900,160 1020,215 1043,229 1048,240'), lobe, notch,
  R('607,190 810,97 850,90 885,97 1110,200 1150,228 1170,262'), bottomRight, bottomFront, A('98,580'), A('68,450'), A('67,415 90,370 133,342'),
);
const outerRim = W('592.7,488 600,497 620,512 653,532 689,550.7 758,584 913,660 1092,746.700 1162,779 1213,802 1263,820 1303,826.700 1320,826 1346,816 1376,788 1405.700,747.700 1448,688 1500,610 1514,585 1520.700,571.700');
const outerWall = area(outerRim, bottomRight, bottomFront, A('98,580'), A('68,450'));
const foldLine = W('602.700,535 605,540 617,551.700 653,569.500 703,590 763,614.300 857,660 1093.600,773 1130,792.700 1197,830 1240,853 1286,869.500 1310,872.700 1336,865 1363,845 1406,780 1450,716.700 1500,643 1513,623 1520.700,602');
const lowerFillet = area(foldLine, W('1521,603 1517,628 1500,663 1440,753 1376,850 1343,885 1317,894 1290,892 1256,878 1163,831'), bottomFront);
const wallFoot = [...A('305,495 500,450 800,390 1020,356'), ...M('0,257 410,210 600,194 650,192 720,202 800,230 945,287')];
const rimInner = [...A('590,314'), ...M('0,165 400,120 600,102 680,97 740,107 900,178 1015,228')];
const rimFoldIn = M('1022,238 1005,260 945,287 800,345 757,375 742,405 750,430 780,447 960,535 1010,549 1060,552 1110,546 1170,530');
const rimNotchIn = R('607,198 815,108 850,102 875,106 1105,212 1137,238 1145,262');
const rimRightIn = R('1145,262 1122,328 975,550 920,637 815,795');
const rimFoldOut = M('1045,250 1020,268 820,357 778,382 768,405 785,432 975,523');
const backLobe = M('820,357 1022,268 1027,400 1000,455 948,510 800,438 768,405 778,382 820,357');

function Post({ x, y, tucked }: { x: number; y: number; tucked?: boolean }) {
  return (
    <g transform={`translate(${x} ${y}) scale(.3333)`} className="[&_path]:[vector-effect:non-scaling-stroke]">
      {tucked ? (
        <>
          <path d="M57 80Q75 84 80 100L118 200Q124 240 110 264L97 262L60 140z" fill="#b0ab36" />
          <path d="M-62 210Q-72 212 -72 222L-77 248L-68 256L-56 250z" fill="#e6e049" />
        </>
      ) : (
        <path d="M57 80Q75 84 80 100L114 194L144 214V220L97 247L60 140z" fill="#b0ab36" />
      )}
      <path d="M-43 2L-38 92L-10 307Q24 321 57 309L42 2z" fill="url(#post)" />
      <path d="M-23 107L-11 307L-73 344L-68 284L-53 264L-43 147z" fill="#99942f" />
      <path d="M-33 102Q-28 97 -23 107L-41 150L-53 264L-68 290L-73 344L-96 337L-90 288L-68 264L-54 132z" fill="#f1ec4c" />
      <path d="M-90 288L-68 292M-68 264L-53 268M-54 132L-41 136M-96 337L-73 344" />
      <path d="M35 104L42 98L52 107L65 130L97 258L120 282L135 329L107 337L57 309z" fill="#d9d344" />
      <path d="M35 104L42 98L52 107L65 130L97 258L120 282L135 329L107 337L93 290L78 262L50 140z" fill="#e6e049" />
      <path d="M50 140L65 134M78 268L97 260M93 292L120 284M107 338L135 330" />
      <path d="M64 136L94 252L97 250L70 134z" fill="#9d9832" stroke="none" />
      <path d="M-43 0A43 20 0 0 1 43 0A43 20 0 0 1 -43 0z" fill="#ece64a" />
      <path d="M-30 -2A30 15 0 0 1 30 -2A30 15 0 0 1 -30 -2z" fill="url(#bore)" />
    </g>
  );
}

function CadModel() {
  return (
    <svg
      viewBox="353 165 1567 881"
      className="absolute top-0 left-0 h-[881px] w-[1567px]"
      fill="none"
      stroke="#2a290b"
      strokeWidth=".8"
      strokeLinejoin="round"
      role="img"
      aria-label="SPLIT_FLIP part"
    >
      <defs>
        <linearGradient id="post">
          <stop offset="0" stopColor="#c9c340" />
          <stop offset=".45" stopColor="#ddd745" />
          <stop offset=".75" stopColor="#d5cf43" />
          <stop offset="1" stopColor="#969130" />
        </linearGradient>
        <linearGradient id="bore">
          <stop offset="0" stopColor="#a39e34" />
          <stop offset="1" stopColor="#eae44a" />
        </linearGradient>
        <linearGradient id="outer" gradientUnits="userSpaceOnUse" x1="1275" y1="840" x2="1350" y2="850">
          <stop offset="0" stopColor="#e1db46" />
          <stop offset=".35" stopColor="#d2cc42" />
          <stop offset="1" stopColor="#87822a" />
        </linearGradient>
        <linearGradient id="fillet" gradientUnits="userSpaceOnUse" x1="850" y1="460" x2="870" y2="590">
          <stop offset="0" stopColor="#e0da46" />
          <stop offset=".35" stopColor="#fbf84e" />
          <stop offset=".6" stopColor="#ffff55" />
          <stop offset="1" stopColor="#f9f54b" />
        </linearGradient>
        <linearGradient id="cyl" gradientUnits="userSpaceOnUse" x1="1262" y1="590" x2="1338" y2="585">
          <stop offset="0" stopColor="#e3dd48" />
          <stop offset=".5" stopColor="#d2cc42" />
          <stop offset="1" stopColor="#98932f" />
        </linearGradient>
        <linearGradient id="bracket" gradientUnits="userSpaceOnUse" x1="1310" y1="760" x2="1375" y2="790">
          <stop offset="0" stopColor="#f0eb4b" />
          <stop offset=".5" stopColor="#d8d244" />
          <stop offset="1" stopColor="#87822a" />
        </linearGradient>
        <linearGradient id="slot" gradientUnits="userSpaceOnUse" x1="1337" y1="0" x2="1358" y2="0">
          <stop offset="0" stopColor="#e6e048" />
          <stop offset="1" stopColor="#a09b32" />
        </linearGradient>
        <linearGradient id="corner" gradientUnits="userSpaceOnUse" x1="1400" y1="0" x2="1425" y2="0">
          <stop offset="0" stopColor="#b4af38" />
          <stop offset="1" stopColor="#e6e048" />
        </linearGradient>
        <radialGradient id="shine">
          <stop offset="0" stopColor="#ffffe8" />
          <stop offset=".35" stopColor="#ffff9c" stopOpacity=".8" />
          <stop offset="1" stopColor="#ffff55" stopOpacity="0" />
        </radialGradient>
        <filter id="soft" x="-20%" y="-20%" width="140%" height="140%">
          <feGaussianBlur stdDeviation="5" />
        </filter>
        <clipPath id="filletClip">
          <path d={lowerFillet} />
        </clipPath>
        <clipPath id="floorClip">
          <path d={area(R('0,0 1290,0'), R('1145,262'), rimRightIn, R('815,795 0,795'))} />
        </clipPath>
      </defs>

      <path d={silhouette} fill="#f7f348" strokeWidth=".5" />

      {/* sloped floor areas and back wall */}
      <path d={area(wallFoot, M('905,305 750,460 630,512 575,527'), rev([...A('360,617 620,738'), ...M('0,592 575,527')]))} fill="url(#fillet)" stroke="none" />
      <path d={area(M('575,527'), M('750,460'), M('905,305'), M('945,287'), M('742,405'), M('735,605'))} fill="#f9f54a" stroke="none" />
      <ellipse cx="1162" cy="469" rx="28" ry="18" fill="url(#shine)" stroke="none" />
      <path d={area(A('248,365 350,345 590,314'), rimInner, M('1022,240'), M('945,287'), rev(wallFoot))} fill="#dcd644" />
      <path d={area(M('500,111 600,102 680,97 740,107 900,178'), M('910,270'), M('800,230 720,202 650,192 508,202'))} fill="#e3dd47" stroke="none" />

      {/* interior walls around the notch */}
      <path d={area(R('875,105'), R('1105,212 1137,238 1145,262'), R('1122,328'), R('985,250 880,200'))} fill="#e6e047" />
      <path d={area(R('880,200'), R('1122,328'), R('975,550'), R('805,585'), R('618,492'))} fill="#fcf94d" stroke="none" />
      <path d={area(M('742,405'), M('750,430 780,447 960,535'), M('980,765'), M('900,725 750,600'))} fill="#e7e149" stroke="none" />
      <path d={area(R('330,395 410,435 500,450 570,445 628,427'), R('720,370 800,280 818,200'), R('820,195 850,193 880,200'), R('875,270 820,370 740,440 665,475 620,492 500,512 420,503 330,465'))} fill="#fbf84f" />
      <ellipse cx="1299" cy="640" rx="22" ry="5" fill="url(#shine)" stroke="none" />
      <ellipse cx="1407" cy="583" rx="17" ry="6" transform="rotate(-60 1407 583)" fill="url(#shine)" stroke="none" />
      <path d={area(R('388,207 480,222 607,198'), R('628,427 570,445 500,450 410,435'))} fill="url(#cyl)" />
      <path d={area(R('607,198'), R('815,108'), R('818,200 800,280 720,370 628,427'))} fill="#a5a032" />
      <path d={area(R('815,108 850,102 875,105'), R('880,200 850,193 818,200'))} fill="url(#corner)" />

      {/* outside of the back lobe */}
      <path d={area(rimFoldOut, M('948,510'), rev(lobe))} fill="#8d882c" stroke="none" />
      <path d={area(backLobe)} fill="#a5a032" />
      <path d={area(M('768,405 778,382 820,357'), M('825,450'), M('785,432'))} fill="#8f8a2d" />
      <path d={area(M('1048,240'), M('1053,335 1027,355'), M('1022,268'))} fill="#a39e33" />
      <path d={area(rimFoldIn, R('607,190'), rev(notch), rev(rimFoldOut))} fill="#f0eb4c" />
      <path d={area(M('0,153 400,107 600,88 670,84 740,93 1020,215 1043,229 1048,240 1020,268'), M('1005,260 1022,238'), rev(rimInner), A('596,302'))} fill="#f3ee4e" />
      <path d={area(R('607,190 810,97 850,90 885,97 1110,200 1150,228 1170,262 1172,275'), R('1145,262'), rev(rimNotchIn))} fill="#f0eb4c" />

      {/* floor lines */}
      <path d={trace(A('1020,356 860,515 720,655 620,738'))} />
      <path d={trace(A('1005,268 1020,356'))} />
      <path d={trace([...A('620,738'), ...M('0,592 575,527')])} />
      <path d={trace(M('575,527 735,603'))} />
      <path d={trace(M('555,490 575,527 660,502 750,460'))} />
      <path d={trace(M('400,120 405,210 420,235'))} />
      <path d={trace(M('903,178 910,268 900,303'))} />
      <path d={trace(M('780,447 776,480'))} />
      <path d={trace(M('742,405 748,480'))} />
      <path d={trace(R('618,492'), R('805,585'), R('870,593'))} />
      <path d={trace(R('805,585 730,705'))} />
      <path d={trace(R('985,165 987,250 997,320 985,400'))} />
      <path d={trace(R('410,435 408,465 385,488'))} />
      <path d={trace(R('597,438 603,470 618,492'))} />
      <path d={trace(R('628,427 635,450 665,475'))} />

      <Post x={1092.700} y={422.700} />
      <Post x={1198.700} y={536} tucked />
      <g clipPath="url(#floorClip)">
        <Post x={1440} y={590.700} tucked />
      </g>

      {/* outer walls */}
      <path d={outerWall} fill="url(#outer)" stroke="none" />
      <g clipPath="url(#filletClip)">
        <path d={trace(bottomFront)} stroke="#79741f" strokeWidth="14" filter="url(#soft)" opacity=".85" />
        <path d={trace(W('1345,884 1317,896 1290,894 1256,880 1163,833'))} stroke="#79741f" strokeWidth="12" filter="url(#soft)" opacity=".7" />
      </g>
      <path d={trace(outerRim)} />
      <path d={trace(foldLine)} />
      <path d={trace(W('757.500,584 763,614.300 754,622 749,632'))} />
      <path d={trace(W('1092,746.700 1093.600,773 1112,800 1136,819 1160,831'))} />
      <path d={trace(R('1108,395 1112,490 1110,550'))} />
      <path d={trace(R('955,628 962,708 950,780 925,835'))} />

      {/* rim, front and right */}
      <path d={area(W('690,546 777,587 804,600 1164,774'), W('1162,779 1092,746.700 913,660 758,584 689,550.700'))} fill="#f1ec4d" />
      <path d={area(rimRightIn, R('827,803'), W('1448,688 1500,610 1514,585 1520.700,571.700'))} fill="#f1ec4d" />

      {/* right bracket */}
      <path d={area(R('238,663'), R('230,750 220,775'), R('95,893'), R('250,965 400,1020 520,1040 580,1036 650,1008 740,925 827,803'), R('730,710'), R('703,607'), R('655,663'), R('375,705'))} fill="url(#bracket)" />
      <path d={area(R('703,607'), R('730,710'), R('827,803'), R('760,900 690,960'), R('683,835'), R('655,663'))} fill="#87822a" stroke="none" />
      <path d={trace(R('703,607 725,700 730,710'), R('827,803'))} />
      <path d={area(R('330,703'), R('340,880 348,930 400,985 460,1012 540,1028 600,1010 655,950 680,890 683,835'), R('655,663'), R('613,675'), R('375,705'))} fill="#fdfb50" />
      <path d={area(R('330,703'), R('375,705'), R('380,880'), R('340,880'))} fill="#e6e048" />
      <path d={area(R('375,705'), R('613,675'), R('642,850'), R('380,880'))} fill="#dcd644" />
      <path d={area(R('613,675'), R('655,663'), R('683,835'), R('642,850'))} fill="url(#slot)" />
      <path d={area(R('380,880'), R('642,850 640,875 618,903'), R('430,925 395,905 380,880'))} fill="#ece74a" />
      <path d={area(R('430,925'), R('618,903'), R('600,940 575,967 545,977 500,968 430,925'))} fill="#f6f14b" />
      <path d={trace(R('430,925 405,955 398,973'))} />
      <path d={trace(R('618,903 650,918 665,937'))} />
      <ellipse cx="1295" cy="811" rx="20" ry="5" transform="rotate(18 1295 811)" fill="url(#shine)" stroke="none" />
      <ellipse cx="1263" cy="790" rx="14" ry="5" transform="rotate(55 1263 790)" fill="url(#shine)" stroke="none" />
      <ellipse cx="1297.500" cy="740.500" rx="17" ry="16" fill="#cfc941" />
      <ellipse cx="1297.500" cy="738" rx="17" ry="15" fill="#f7f34a" />
      <path d={area(R('238,663 273,660'), R('330,682 360,693'), R('615,663 640,650 675,612'), R('703,607'), R('660,655 620,675'), R('375,705 350,703'))} fill="#ece74b" />

      {/* left bracket */}
      <path d={area(A('245,87'), A('362,68'), A('372,140 382,160 405,182'), A('590,314'), A('350,345 235,370'), A('235,200'))} fill="#c5bf3e" />
      <path d={area(A('160,205'), A('240,92'), A('262,87'), A('265,250 255,290 228,310'))} fill="#89842b" />
      <path d={area(A('245,90'), A('260,87'), A('265,250 258,280 230,312'), A('230,285 243,255'))} fill="#b7b239" />
      <path d={area(A('190,225 193,195 206,183 218,200 218,245'))} fill="#f3ee4d" />
      <path d={area(A('365,55'), A('369,62 383,130 390,148 412,172'), A('596,302'), A('590,314'), A('405,182 382,160 372,140'), A('360,70'))} fill="#b4af38" />
      <path d={area(A('133,205'), A('218,90 228,82 245,77'), A('365,55'), A('360,68'), A('250,86 240,92'), A('160,205'), A('222,250 216,262'))} fill="#eee94c" />
      <path d={area(A('133,207'), A('216,262'), A('220,340 240,400'), A('357,630'), A('250,575 150,515 90,470 68,445'), A('67,415 90,370 133,342'))} fill="#eae54a" stroke="none" />
      <path d={area(A('133,342 90,370 67,415 68,436'), A('105,443 130,430 140,400'), A('135,342'))} fill="#f9f54c" stroke="none" />
      <path d={trace(A('133,207 133,385'))} />
      <path d={trace(A('139,212 140,400 130,430 105,443 68,430'))} strokeWidth=".6" />
      <path d={trace(A('133,342 90,370 67,415 68,445'))} strokeWidth=".6" />
      <path d={trace(A('93,370 100,387 133,380'))} />
      <path d={trace(A('133,383 112,405 105,443'))} />
      <path d={area(A('216,262'), A('224,252'), A('232,335 250,395'), A('365,620'), A('357,632'), A('240,400 222,340'))} fill="#a8a334" />
      <path d={trace(A('68,445 90,470 150,515 250,575 357,632'))} />
    </svg>
  );
}

const viewTools = [
  ['zoomfit', 'Refit'], ['zoomin', 'Zoom in'], ['zoomout', 'Zoom out'], ['repaint', 'Repaint'], ['render', 'Rendering'],
  ['display', 'Display style'], ['saved', 'Saved orientations'], ['viewmgr', 'View manager'], ['persp', 'Perspective'], ['section', 'Section'],
  ['datums', 'Datum display'], ['annot', 'Annotation display'], ['spin', 'Spin center'], ['sim', 'Simulate'], ['pause', 'Pause'], ['results', 'Results'],
];

function Viewport() {
  return (
    <main className="relative min-w-0 flex-1 overflow-hidden bg-[#e8e9ee]">
      <CadModel />
      <div className="relative mx-auto mt-[7px] flex h-8 w-fit items-center border border-[#a3a6ab] bg-[#f9fafc] px-0.5">
        {viewTools.map(([name, label]) => (
          <span key={name} className="flex w-[26px] justify-center">
            <button
              type="button"
              aria-label={label}
              className={`flex h-6 w-6 items-center justify-center border ${name === 'annot' ? 'border-[#a3a6ab] bg-[#dddfe2]' : 'border-transparent'}`}
            >
              <Icon name={name} />
            </button>
          </span>
        ))}
      </div>
    </main>
  );
}

/* ---------- status bar ---------- */

function StatusBar() {
  return (
    <footer className="shrink-0">
      <div className="flex h-8 items-center border-t border-[#b0b3b8] bg-[#f9fafa]">
        <button type="button" aria-label="Toggle navigator" className="ml-1.5 flex h-6 w-[22px] items-center justify-center border border-[#a9acb0] bg-[#dfe1e3]">
          <Icon name="navpanel" />
        </button>
        <div className="ml-[7px] flex items-center gap-2.5">
          <IconButton name="globe" label="Toggle browser" />
          <IconButton name="windowicon" label="Full screen" />
        </div>
        <span className="ml-3 h-6 w-px bg-[#a9acb0]" />
        <span className="ml-1.5 h-[5px] w-[5px] rounded-full bg-[#1b6f99]" />
        <p className="ml-[5px] whitespace-nowrap">Pattern creation successful.</p>
        <div className="ml-auto flex h-[26px] items-center">
          <span className="mr-1 h-full w-px bg-[#b0b3b7]" />
          <span className="mr-0.5 h-full w-px bg-[#b0b3b7]" />
          <div className="flex h-6 w-[42px] border border-[#c0c3c6]">
            <button type="button" aria-label="Find" className="flex w-[27px] items-center justify-center border-r border-[#c0c3c6]">
              <Icon name="binoculars" />
            </button>
            <button type="button" aria-label="Find options" className="flex flex-1 items-center justify-center">
              <Caret />
            </button>
          </div>
          <span className="ml-0.5 h-full w-px bg-[#b0b3b7]" />
        </div>
        <div className="relative mr-[18px] ml-[90px] h-[23px] w-[165px]">
          <select aria-label="Selection filter" className="h-full w-full appearance-none border border-[#a3a6ab] bg-[#f9fafa] pl-[7px] outline-none">
            <option>Geometry</option>
          </select>
          <span className="pointer-events-none absolute inset-y-0 right-0 flex w-4 items-center justify-center border border-[#a3a6ab]">
            <Caret />
          </span>
        </div>
      </div>
      <div className="flex h-0.5 bg-[#484848]">
        <span className="ml-[245px] w-12 bg-[#b8692c]" />
      </div>
    </footer>
  );
}

export default function App() {
  return (
    <div className="flex h-screen flex-col overflow-hidden bg-[#f9fafc] font-['Open_Sans',sans-serif] text-[11px] leading-4 text-[#43474c]">
      <TitleBar />
      <TabBar />
      <Ribbon />
      <div className="flex min-h-0 flex-1">
        <SidePanel />
        <Viewport />
      </div>
      <StatusBar />
    </div>
  );
}
